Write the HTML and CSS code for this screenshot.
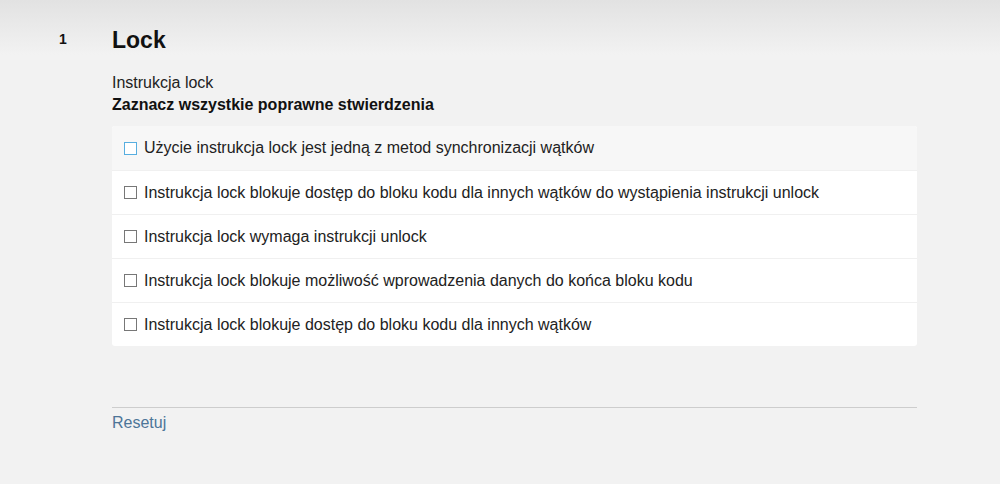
FILE: index.html
```html
<!DOCTYPE html>
<html lang="pl">
<head>
<meta charset="utf-8">
<link rel="stylesheet" href="styles.css">
</head>
<body>
<div class="page">
  <div class="question">
    <div class="qnum">1</div>
    <div class="qbody">
      <h1 class="qtitle">Lock</h1>
      <div class="qdesc">Instrukcja lock</div>
      <div class="qprompt">Zaznacz wszystkie poprawne stwierdzenia</div>
      <ul class="options">
        <li class="option hover"><span class="box"></span><span class="label">Użycie instrukcja lock jest jedną z metod synchronizacji wątków</span></li>
        <li class="option"><span class="box"></span><span class="label">Instrukcja lock blokuje dostęp do bloku kodu dla innych wątków do wystąpienia instrukcji unlock</span></li>
        <li class="option"><span class="box"></span><span class="label">Instrukcja lock wymaga instrukcji unlock</span></li>
        <li class="option"><span class="box"></span><span class="label">Instrukcja lock blokuje możliwość wprowadzenia danych do końca bloku kodu</span></li>
        <li class="option"><span class="box"></span><span class="label">Instrukcja lock blokuje dostęp do bloku kodu dla innych wątków</span></li>
      </ul>
      <div class="footer">
        <a class="reset" href="#">Resetuj</a>
      </div>
    </div>
  </div>
</div>
</body>
</html>
```

FILE: styles.css
```css
html, body {
  margin: 0;
  padding: 0;
}
body {
  background: #f2f2f2;
  font-family: "Liberation Sans", Arial, sans-serif;
  color: #1a1a1a;
  width: 1000px;
  height: 484px;
  overflow: hidden;
}
.page {
  background: linear-gradient(to bottom, #e2e2e2 0px, #f2f2f2 55px, #f2f2f2 100%);
  height: 484px;
  padding-top: 27px;
  box-sizing: border-box;
}
.question {
  display: flex;
}
.qnum {
  width: 112px;
  box-sizing: border-box;
  padding-left: 59px;
  font-size: 14px;
  font-weight: bold;
  line-height: 20px;
  margin-top: 2px;
  color: #111;
  flex: none;
}
.qbody {
  width: 805px;
}
.qtitle {
  margin: 0;
  font-size: 23px;
  line-height: 26px;
  font-weight: bold;
  color: #111;
}
.qdesc {
  margin-top: 19px;
  font-size: 16px;
  line-height: 22px;
  color: #222;
}
.qprompt {
  font-size: 16px;
  line-height: 22px;
  font-weight: bold;
  color: #111;
}
.options {
  list-style: none;
  margin: 10px 0 0 0;
  padding: 0;
  background: #fff;
  border-radius: 3px;
  overflow: hidden;
}
.option {
  display: flex;
  align-items: center;
  box-sizing: border-box;
  height: 44px;
  padding-left: 12px;
  border-top: 1px solid #f0f0f0;
  font-size: 16px;
  color: #222;
}
.option:first-child {
  border-top: none;
  height: 44px;
}
.option.hover {
  background: #f7f7f7;
}
.box {
  width: 11px;
  height: 11px;
  border: 1px solid #777;
  background: #fff;
  margin-right: 7px;
  flex: none;
}
.option.hover .box {
  border-color: #57aee0;
}
.footer {
  margin-top: 61px;
  border-top: 1px solid #cdcdcd;
  padding-top: 5px;
}
.reset {
  font-size: 16px;
  line-height: 20px;
  color: #4d7598;
  text-decoration: none;
}
```
